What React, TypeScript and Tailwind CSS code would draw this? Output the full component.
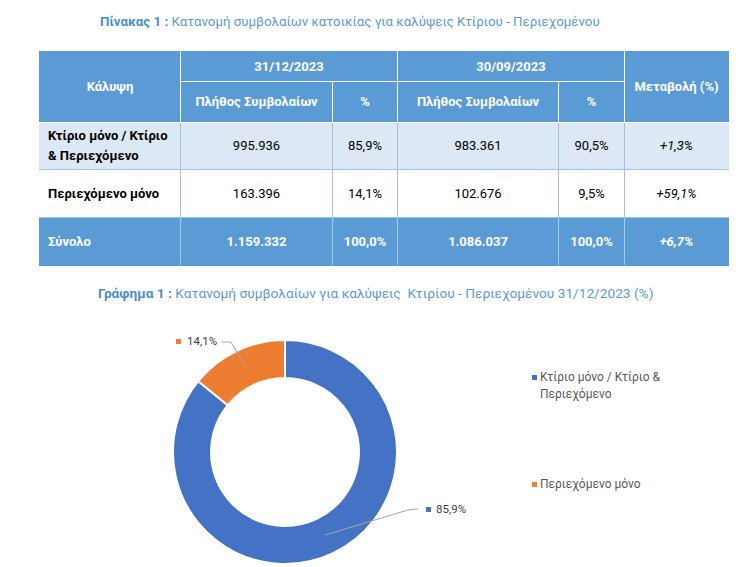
import React from "react";

const font = { fontFamily: "Roboto, 'Noto Sans', sans-serif" };

function Table() {
  const hb = "border border-white";
  const bb = "border border-[#9dc3e6]";
  return (
    <table className="ml-[39px] w-[689px] border-collapse table-fixed text-[13px]">
      <colgroup>
        <col className="w-[141px]" />
        <col className="w-[152px]" />
        <col className="w-[65px]" />
        <col className="w-[161px]" />
        <col className="w-[66px]" />
        <col className="w-[104px]" />
      </colgroup>
      <thead className="bg-[#5b9bd5] text-white font-bold">
        <tr className="h-[30px]">
          <th rowSpan={2} className={`${hb} border-l-[#5b9bd5] border-t-[#5b9bd5] font-bold`}>Κάλυψη</th>
          <th colSpan={2} className={`${hb} border-t-[#5b9bd5] font-bold`}>31/12/2023</th>
          <th colSpan={2} className={`${hb} border-t-[#5b9bd5] font-bold`}>30/09/2023</th>
          <th rowSpan={2} className={`${hb} border-r-[#5b9bd5] border-t-[#5b9bd5] font-bold`}>Μεταβολή (%)</th>
        </tr>
        <tr className="h-[41px]">
          <th className={`${hb} font-bold`}>Πλήθος Συμβολαίων</th>
          <th className={`${hb} font-bold`}>%</th>
          <th className={`${hb} font-bold`}>Πλήθος Συμβολαίων</th>
          <th className={`${hb} font-bold`}>%</th>
        </tr>
      </thead>
      <tbody className="text-black">
        <tr className="h-[47px] bg-[#dde8f5]">
          <td className={`${bb} border-l-[#dde8f5] border-t-[#5b9bd5] pl-[8px] font-bold leading-[20px]`}>
            Κτίριο μόνο / Κτίριο<br />& Περιεχόμενο
          </td>
          <td className={`${bb} border-t-[#5b9bd5] text-center`}>995.936</td>
          <td className={`${bb} border-t-[#5b9bd5] text-center`}>85,9%</td>
          <td className={`${bb} border-t-[#5b9bd5] text-center`}>983.361</td>
          <td className={`${bb} border-t-[#5b9bd5] text-center`}>90,5%</td>
          <td className={`${bb} border-t-[#5b9bd5] border-r-[#dde8f5] text-center italic`}>+1,3%</td>
        </tr>
        <tr className="h-[48px] bg-white">
          <td className={`${bb} border-l-white pl-[8px] font-bold`}>Περιεχόμενο μόνο</td>
          <td className={`${bb} text-center`}>163.396</td>
          <td className={`${bb} text-center`}>14,1%</td>
          <td className={`${bb} text-center`}>102.676</td>
          <td className={`${bb} text-center`}>9,5%</td>
          <td className={`${bb} border-r-white text-center italic`}>+59,1%</td>
        </tr>
        <tr className="h-[48px] bg-[#5b9bd5] text-white font-bold">
          <td className="border border-[#a9cbeb] border-l-[#5b9bd5] border-t-[#9dc3e6] border-b-[#5b9bd5] pl-[8px]">Σύνολο</td>
          <td className="border border-[#a9cbeb] border-t-[#9dc3e6] border-b-[#5b9bd5] text-center">1.159.332</td>
          <td className="border border-[#a9cbeb] border-t-[#9dc3e6] border-b-[#5b9bd5] text-center">100,0%</td>
          <td className="border border-[#a9cbeb] border-t-[#9dc3e6] border-b-[#5b9bd5] text-center">1.086.037</td>
          <td className="border border-[#a9cbeb] border-t-[#9dc3e6] border-b-[#5b9bd5] text-center">100,0%</td>
          <td className="border border-[#a9cbeb] border-t-[#9dc3e6] border-b-[#5b9bd5] border-r-[#5b9bd5] text-center italic">+6,7%</td>
        </tr>
      </tbody>
    </table>
  );
}

function Donut() {
  return (
    <div className="relative w-[525px] h-[262px] shrink-0">
      <svg width="525" height="262" viewBox="0 0 525 262" className="absolute left-0 top-0">
        <path
          d="M 285 34 A 112 112 0 1 1 198.27 75.15 L 227.69 99.19 A 74 74 0 1 0 285 72 Z"
          fill="#4472c4"
          stroke="#ffffff"
          strokeWidth="2"
        />
        <path
          d="M 198.27 75.15 A 112 112 0 0 1 285 34 L 285 72 A 74 74 0 0 0 227.69 99.19 Z"
          fill="#ed7d31"
          stroke="#ffffff"
          strokeWidth="2"
        />
        <polyline points="222,36 231,36 245,60" fill="none" stroke="#a6a6a6" strokeWidth="1" />
        <polyline points="418,203 408,204 325,229" fill="none" stroke="#a6a6a6" strokeWidth="1" />
        <rect x="176" y="33" width="5" height="5" fill="#ed7d31" />
        <rect x="426" y="201" width="5" height="5" fill="#4472c4" />
      </svg>
      <span className="absolute left-[187px] top-[27px] text-[11.5px] leading-[16px] text-[#404040]">14,1%</span>
      <span className="absolute left-[436px] top-[195px] text-[11.5px] leading-[16px] text-[#404040]">85,9%</span>
    </div>
  );
}

export default function App() {
  return (
    <div className="w-[755px] h-[567px] bg-white overflow-hidden" style={font}>
      <div className="h-[51px] pt-[14px] pl-[100px] text-[13.3px] leading-[16px] text-[#5b9bd5]">
        <span className="font-bold text-[#4a8fcb]">Πίνακας 1 :</span> Κατανομή συμβολαίων κατοικίας για καλύψεις Κτίριου - Περιεχομένου
      </div>
      <Table />
      <div className="h-[40px] pt-[19px] pl-[98px] text-[13.7px] leading-[16px] text-[#5b9bd5] whitespace-pre">
        <span className="font-bold text-[#4a8fcb]">Γράφημα 1 :</span> Κατανομή συμβολαίων για καλύψεις  Κτιρίου - Περιεχομένου 31/12/2023 (%)
      </div>
      <div className="flex">
        <Donut />
        <div className="flex flex-col pl-[7px] pt-[63px] text-[12px] leading-[17px] text-[#595959]">
          <div className="flex items-start gap-[3px]">
            <span className="mt-[6px] w-[5px] h-[5px] bg-[#4472c4] shrink-0" />
            <span>
              Κτίριο μόνο / Κτίριο &<br />Περιεχόμενο
            </span>
          </div>
          <div className="flex items-start gap-[3px] mt-[73px]">
            <span className="mt-[6px] w-[5px] h-[5px] bg-[#ed7d31] shrink-0" />
            <span>Περιεχόμενο μόνο</span>
          </div>
        </div>
      </div>
    </div>
  );
}
